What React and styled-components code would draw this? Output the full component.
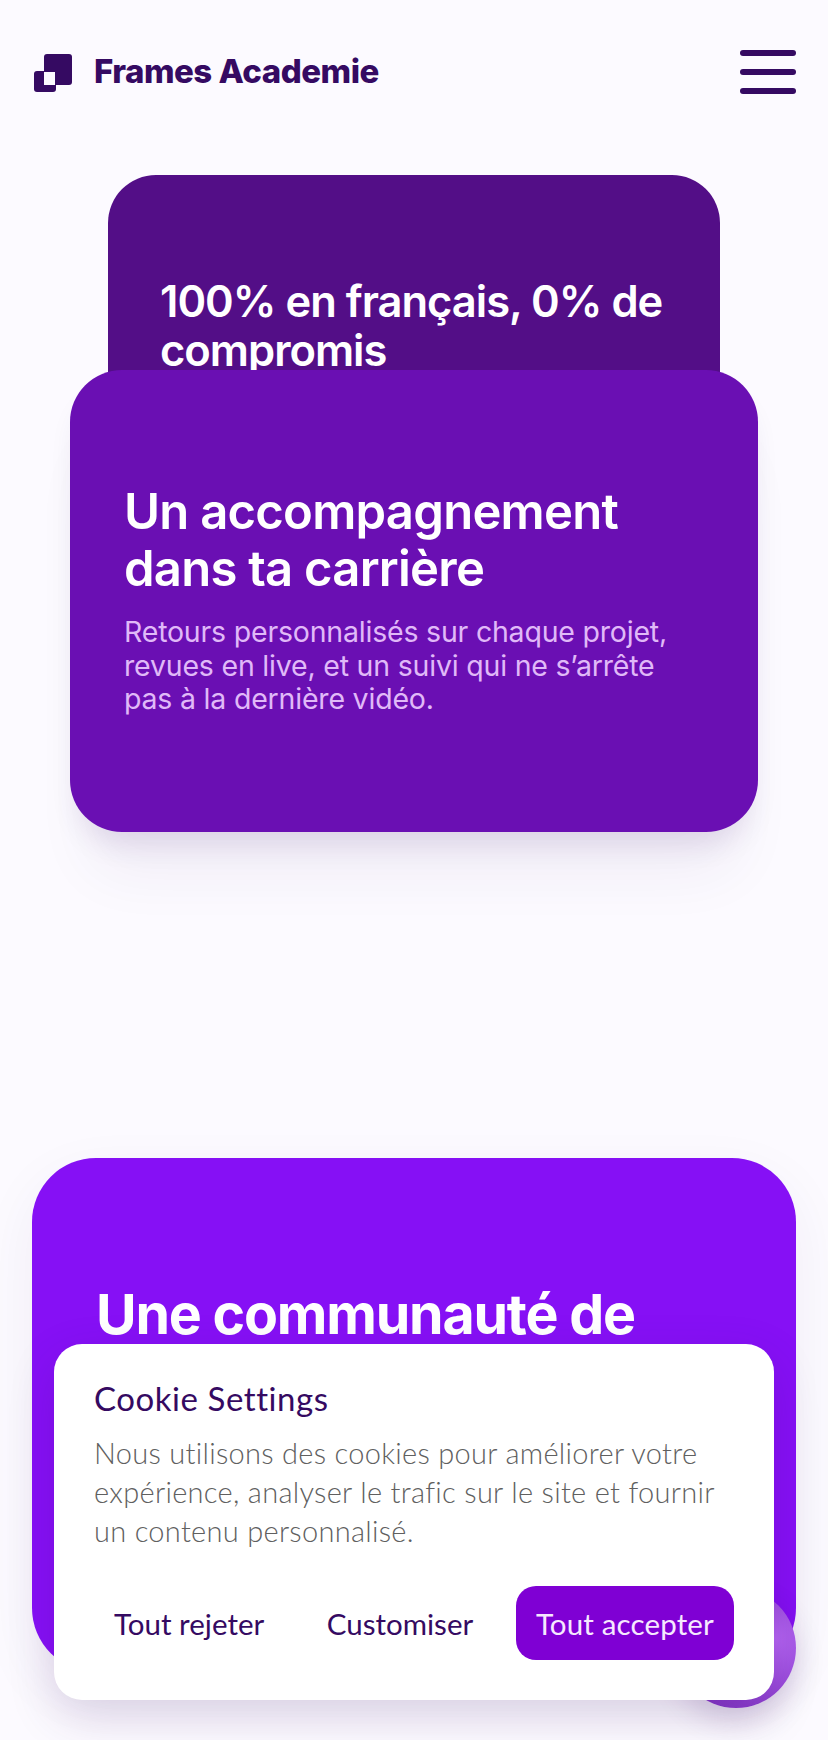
import styled, { createGlobalStyle } from "styled-components";

const GlobalStyle = createGlobalStyle`
  html, body {
    margin: 0;
    padding: 0;
    background: #fcfaff;
  }
  * {
    box-sizing: border-box;
  }
`;

const Page = styled.div`
  position: relative;
  width: 828px;
  height: 1740px;
  overflow: hidden;
  background: #fcfaff;
  font-family: Inter, "Liberation Sans", sans-serif;
`;

const Header = styled.header`
  display: flex;
  align-items: flex-start;
  justify-content: space-between;
  padding: 50px 32px 0 34px;
  height: 175px;
`;

const Brand = styled.div`
  display: flex;
  align-items: center;
  gap: 22px;
  margin-top: 4px;
`;

const BrandName = styled.span`
  margin-top: -4px;
  font-size: 33px;
  line-height: 36px;
  font-weight: 800;
  letter-spacing: -0.5px;
  color: #350a62;
`;

const Burger = styled.button`
  display: flex;
  flex-direction: column;
  gap: 13px;
  width: 56px;
  padding: 0;
  border: none;
  background: none;
`;

const BurgerBar = styled.span`
  display: block;
  height: 6px;
  border-radius: 3px;
  background: #350a62;
`;

const Stack = styled.section`
  display: flex;
  flex-direction: column;
  align-items: center;
  height: 983px;
`;

const BackCard = styled.article`
  width: 612px;
  height: 240px;
  flex-shrink: 0;
  padding: 102px 40px 0 52px;
  border-radius: 48px 48px 0 0;
  background: #530e87;
  overflow: hidden;
`;

const BackTitle = styled.h2`
  margin: 0;
  font-size: 43.5px;
  line-height: 49px;
  font-weight: 600;
  letter-spacing: -1px;
  color: #ffffff;
`;

const FrontCard = styled.article`
  position: relative;
  width: 688px;
  height: 462px;
  flex-shrink: 0;
  margin-top: -45px;
  padding: 113px 80px 0 54px;
  border-radius: 52px;
  background: #6a0fb3;
  box-shadow: 0 20px 30px -10px rgba(53, 10, 98, 0.12), 0 60px 60px -20px rgba(53, 10, 98, 0.06);
`;

const FrontTitle = styled.h2`
  margin: 0 0 18px;
  font-size: 49px;
  line-height: 57px;
  font-weight: 600;
  letter-spacing: -0.75px;
  color: #ffffff;
`;

const FrontText = styled.p`
  margin: 0;
  font-size: 28.5px;
  line-height: 33.5px;
  letter-spacing: -0.2px;
  color: #e0b9f8;
`;

const CommunityCard = styled.article`
  position: relative;
  width: 764px;
  height: 514px;
  margin-left: 32px;
  padding: 123px 60px 0 64px;
  border-radius: 64px;
  background: #8610f5;
  box-shadow: 0 20px 60px rgba(53, 10, 98, 0.06);
`;

const CommunityTitle = styled.h2`
  margin: 0;
  font-size: 55.5px;
  line-height: 66px;
  font-weight: 700;
  letter-spacing: -1.2px;
  color: #ffffff;
`;

const FloatingButton = styled.div`
  position: absolute;
  right: 32px;
  bottom: 32px;
  width: 120px;
  height: 120px;
  border-radius: 50%;
  background: radial-gradient(circle at 82% 42%, #b565f2 0%, #a455e4 25%, #8a3ccb 60%, #7a30bb 100%);
  box-shadow: 0 12px 30px rgba(53, 10, 98, 0.16);
`;

const CookieBanner = styled.aside`
  position: absolute;
  left: 54px;
  top: 1344px;
  width: 720px;
  height: 356px;
  padding: 35px 40px 0;
  border-radius: 28px;
  background: #ffffff;
  box-shadow: 0 16px 48px rgba(53, 10, 98, 0.16);
  font-family: Lato, "Open Sans", sans-serif;
`;

const CookieTitle = styled.h3`
  margin: 0 0 16px;
  font-size: 33px;
  line-height: 38px;
  font-weight: 400;
  letter-spacing: 0.55px;
  color: #350a62;
`;

const CookieText = styled.p`
  margin: 0;
  font-size: 29px;
  line-height: 39px;
  font-weight: 300;
  letter-spacing: 0.3px;
  color: #606060;
`;

const CookieActions = styled.div`
  display: flex;
  align-items: center;
  justify-content: space-between;
  margin-top: 36px;
`;

const CookieButton = styled.button`
  height: 74px;
  padding: 0 20px;
  border: none;
  border-radius: 20px;
  background: ${(p) => (p.$primary ? "#7f00d4" : "transparent")};
  color: ${(p) => (p.$primary ? "#f6e8ff" : "#350a62")};
  font-family: inherit;
  font-size: 29.5px;
  font-weight: 400;
  letter-spacing: ${(p) => (p.$primary ? "0.15px" : "0")};
`;

const LogoMark = () => (
  <svg width="38" height="38" viewBox="0 0 38 38">
    <rect x="10" y="0" width="28" height="31" rx="3" fill="#350a62" />
    <rect x="0" y="17" width="22" height="21" rx="3" fill="#350a62" />
    <rect x="10" y="18" width="11" height="13" fill="#fcfaff" />
  </svg>
);

export default function App() {
  return (
    <Page>
      <GlobalStyle />
      <Header>
        <Brand>
          <LogoMark />
          <BrandName>Frames Academie</BrandName>
        </Brand>
        <Burger aria-label="Menu">
          <BurgerBar />
          <BurgerBar />
          <BurgerBar />
        </Burger>
      </Header>

      <Stack>
        <BackCard>
          <BackTitle>100% en français, 0% de compromis</BackTitle>
        </BackCard>
        <FrontCard>
          <FrontTitle>Un accompagnement dans ta carrière</FrontTitle>
          <FrontText>
            Retours personnalisés sur chaque projet, revues en live, et un suivi qui ne s’arrête pas à la dernière vidéo.
          </FrontText>
        </FrontCard>
      </Stack>

      <CommunityCard>
        <CommunityTitle>Une communauté de</CommunityTitle>
      </CommunityCard>

      <FloatingButton />

      <CookieBanner>
        <CookieTitle>Cookie Settings</CookieTitle>
        <CookieText>
          Nous utilisons des cookies pour améliorer votre expérience, analyser le trafic sur le site et fournir un contenu personnalisé.
        </CookieText>
        <CookieActions>
          <CookieButton>Tout rejeter</CookieButton>
          <CookieButton>Customiser</CookieButton>
          <CookieButton $primary>Tout accepter</CookieButton>
        </CookieActions>
      </CookieBanner>
    </Page>
  );
}
